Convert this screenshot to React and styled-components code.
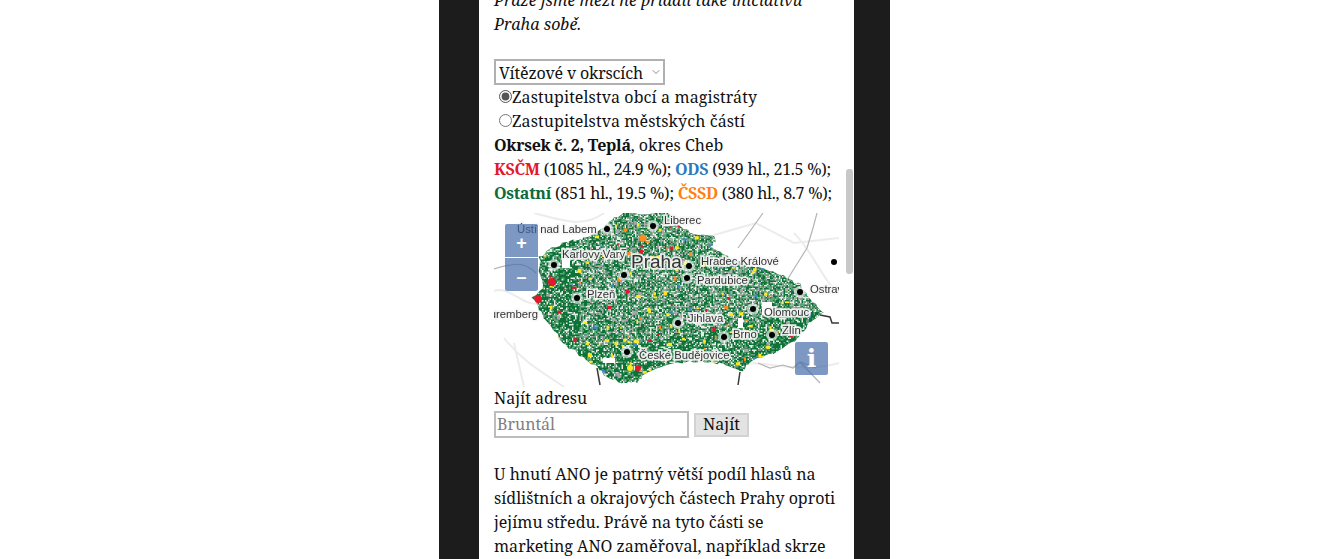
import React from "react"
import styled, { createGlobalStyle } from "styled-components"
import { ChevronDown } from "lucide-react"

const color = {
  band: "#1c1c1c",
  text: "#111",
  kscm: "#e2182d",
  ods: "#2b7bba",
  other: "#0b6b3a",
  cssd: "#ff7f0e",
  control: "rgba(63, 104, 166, 0.68)",
}

const GlobalStyle = createGlobalStyle`
  html, body {
    margin: 0;
    height: 100%;
    overflow: hidden;
    background: #fff;
  }
`

const Page = styled.div`
  display: flex;
  justify-content: center;
  height: 100vh;
  overflow: hidden;
`

const Band = styled.div`
  display: flex;
  width: 451px;
  box-sizing: border-box;
  padding: 0 36px 0 40px;
  background: ${color.band};
`

const Article = styled.main`
  position: relative;
  width: 375px;
  box-sizing: border-box;
  padding: 0 15px;
  overflow: hidden;
  background: #fff;
  color: ${color.text};
  font-family: "Noto Serif", "DejaVu Serif", serif;
  font-size: 16px;
  line-height: 24px;
`

const Paragraph = styled.p`
  margin: 0 0 23px;
`

const Lead = styled(Paragraph)`
  margin-top: -12px;
  font-style: italic;
  letter-spacing: 0.05px;
`

const SelectWrap = styled.div`
  position: relative;
  width: 171px;
  height: 26px;

  svg {
    position: absolute;
    top: 7px;
    right: 3px;
    color: #666;
    pointer-events: none;
  }
`

const Select = styled.select`
  display: block;
  width: 100%;
  height: 100%;
  box-sizing: border-box;
  padding: 0 0 4px 3px;
  border: 2px solid #b0b0b0;
  border-radius: 0;
  appearance: none;
  background: #fff;
  color: ${color.text};
  font: inherit;
  letter-spacing: -0.18px;
`

const RadioRow = styled.label`
  display: block;
  height: 24px;
  letter-spacing: 0.1px;
`

const Radio = styled.input.attrs({ type: "radio", name: "level" })`
  margin: 3px 0 0 5px;
  accent-color: #555;
`

const Line = styled.div`
  white-space: nowrap;
`

const Stats = styled(Line)`
  letter-spacing: -0.25px;
`

const Strong = styled.strong`
  letter-spacing: -0.3px;
`

const Party = styled(Strong)`
  color: ${({ $color }) => $color};
`

const MapBox = styled.div`
  position: relative;
  height: 174px;
  margin: 8px 0 -1px;
  overflow: hidden;
  background: #fff;
`

const MapSvg = styled.svg`
  display: block;
  width: 345px;
  height: 174px;
  filter: blur(0.35px);
`

const MapLabel = styled.text`
  fill: #333;
  stroke: #f6f6f6;
  stroke-width: 3.5px;
  stroke-opacity: 0.9;
  paint-order: stroke;
  font-family: "Liberation Sans", Arial, sans-serif;
  font-size: ${({ $size }) => $size || 11.3}px;
`

const ZoomControl = styled.div`
  position: absolute;
  top: 11px;
  left: 11px;
  display: flex;
  flex-direction: column;
  gap: 1px;
  width: 33px;
  overflow: hidden;
  border-radius: 2px;
`

const ControlButton = styled.button`
  display: flex;
  align-items: center;
  justify-content: center;
  width: 33px;
  height: 33px;
  padding: 4px 0 0;
  border: 0;
  background: ${color.control};
  color: #fff;
  font-family: "Liberation Sans", Arial, sans-serif;
  font-size: 18px;
  font-weight: 700;
  line-height: 1;
`

const InfoButton = styled(ControlButton)`
  position: absolute;
  right: 11px;
  bottom: 12px;
  padding: 0;
  border-radius: 2px;
  font-family: "DejaVu Serif", serif;
  font-size: 25px;
`

const SearchRow = styled.div`
  display: flex;
  align-items: center;
  gap: 5px;
  height: 27px;
  margin: 1px 0 24px;
`

const SearchInput = styled.input`
  width: 195px;
  height: 27px;
  box-sizing: border-box;
  padding: 0 1px 2px;
  border: 2px solid #bdbdbd;
  color: ${color.text};
  font: inherit;

  &::placeholder {
    color: #808080;
    opacity: 1;
  }
`

const SearchButton = styled.button`
  width: 55px;
  height: 24px;
  box-sizing: border-box;
  padding: 0 0 2px;
  border: 2px solid #d2d2d2;
  background: #e3e3e3;
  color: ${color.text};
  font: inherit;
  line-height: 18px;
`

const Scrollbar = styled.div`
  position: absolute;
  top: 169px;
  right: 1px;
  width: 7px;
  height: 105px;
  border-radius: 3px;
  background: #c8c8c8;
`

const outline = [
  [46, 45], [55, 36], [66, 32], [80, 27], [93, 25], [109, 15], [119, 5], [130, 0], [173, 0], [185, 12], [196, 20],
  [219, 24], [221, 29], [215, 34], [226, 38], [246, 50], [263, 55], [276, 58], [293, 65], [306, 72], [319, 89],
  [331, 99], [316, 108], [313, 112], [304, 125], [296, 132], [276, 142], [256, 149], [246, 159], [233, 152],
  [216, 149], [196, 149], [176, 152], [153, 159], [143, 169], [129, 170], [116, 165], [103, 155], [86, 142],
  [69, 129], [53, 109], [46, 99], [39, 85], [49, 75], [46, 59],
]

const rng = (seed) => () => {
  seed = (seed * 16807) % 2147483647
  return seed / 2147483647
}

// hrubý okraj republiky: každou hranu rozsekat a trochu rozházet
const buildBorder = () => {
  const random = rng(99)
  const points = []
  outline.forEach(([x, y], i) => {
    const [nextX, nextY] = outline[(i + 1) % outline.length]
    for (let step = 0; step < 5; step++) {
      const t = step / 5
      points.push(`${x + (nextX - x) * t + (random() - 0.5) * 3},${y + (nextY - y) * t + (random() - 0.5) * 3}`)
    }
  })
  return points.join(" ")
}

// mozaika okrsků, po barvách do jedné cesty
const buildMosaic = () => {
  const random = rng(4711)
  const cells = { "#e6ece7": "", "#a9b0ad": "", "#66a37e": "" }
  for (let y = 0; y < 174; y += 1.5) {
    for (let x = 36; x < 334; x += 1.5) {
      const edge = x < 85 || y > 132 || y + x * 0.2 > 160
      const dark = edge ? 0.6 : 0.38
      const pick = random()
      if (pick < dark) continue
      const fill = pick < dark + 0.2 ? "#66a37e" : pick < dark + 0.42 ? "#e6ece7" : "#a9b0ad"
      cells[fill] += `M${x} ${y}h1.5v1.5h-1.5z`
    }
  }
  return Object.entries(cells)
}

const buildSpots = () => {
  const random = rng(2024)
  const colors = ["#ffe81f", "#ffe81f", "#ffe81f", "#ff8a1f", "#3f86c8", "#e2182d", "#a9a3ad", "#a9a3ad"]
  const spots = []
  for (let i = 0; i < 300; i++) {
    spots.push({
      x: 45 + random() * 285,
      y: 3 + random() * 165,
      fill: colors[Math.floor(random() * colors.length)],
      w: 1.5 + random() * 3,
      h: 1.5 + random() * 2.5,
    })
  }
  return spots
}

const border = buildBorder()
const mosaic = buildMosaic()
const spots = buildSpots()

const cities = [
  ["Ústí nad Labem", 23, 20, 113, 16],
  ["Liberec", 170, 11, 159, 13],
  ["Karlovy Vary", 68, 45, 60, 52],
  ["Praha", 137, 55, 130, 62, 19],
  ["Hradec Králové", 207, 52, 195, 53],
  ["Pardubice", 203, 71, 193, 65],
  ["Plzeň", 93, 85, 83, 85],
  ["Ostrava", 316, 80, 306, 79],
  ["Olomouc", 270, 103, 259, 96],
  ["Jihlava", 194, 109, 184, 110],
  ["Zlín", 288, 121, 278, 122],
  ["Brno", 239, 125, 230, 124],
  ["České Budějovice", 145, 146, 133, 139],
]

const blobs = [
  [58, 69, 4, "#e2182d"],
  [44, 86, 4, "#e2182d"],
  [144, 155, 3, "#e2182d"],
  [149, 25, 3.5, "#ff8a1f"],
  [240, 50, 4, "#3f86c8"],
  [136, 155, 3, "#ffe81f"],
]

const holes = [
  [109, 145, 12, 5],
  [68, 45, 8, 10],
  [268, 89, 10, 13],
  [244, 105, 5, 10],
]

const CzechMap = () => (
  <MapSvg viewBox="0 0 345 174" role="img" aria-label="Mapa výsledků v okrscích">
    <defs>
      <clipPath id="cz">
        <polygon points={border} />
      </clipPath>
    </defs>
    <g fill="none" stroke="#ececec" strokeWidth="2">
      <path d="M0 78 C15 72 30 95 46 90" />
      <path d="M10 125 C30 150 50 160 70 174" />
      <path d="M40 0 C70 8 90 15 110 0" />
      <path d="M220 22 L262 10 L300 30 L345 25" />
      <path d="M300 20 C320 40 330 70 345 80" />
      <path d="M250 150 C280 150 310 160 345 150" />
      <path d="M20 130 L30 174" />
    </g>
    <g fill="none" stroke="#b4b4b4" strokeWidth="1.2">
      <path d="M244 35 L269 0" />
      <path d="M293 67 L313 35 L319 15 L323 0" />
      <path d="M264 150 L276 155 L289 152 L299 155 L306 149 L322 155" />
      <path d="M306 149 L326 170" />
      <path d="M0 56 C20 50 30 48 42 60" />
    </g>
    <g fill="none" stroke="#3a3a3a" strokeWidth="1.5">
      <path d="M326 102 L336 104 L338 110 L345 110" />
      <path d="M246 159 L244 172" />
      <path d="M103 155 L106 172" />
      <path d="M0 98 L8 102" strokeWidth="1" stroke="#888" />
    </g>
    <polygon points={border} fill="#0d7236" />
    <g clipPath="url(#cz)">
      {mosaic.map(([fill, d]) => (
        <path key={fill} d={d} fill={fill} />
      ))}
      {spots.map((spot, i) => (
        <rect key={i} x={spot.x} y={spot.y} width={spot.w} height={spot.h} fill={spot.fill} />
      ))}
      {blobs.map(([x, y, r, fill], i) => (
        <circle key={i} cx={x} cy={y} r={r} fill={fill} />
      ))}
    </g>
    {holes.map(([x, y, w, h], i) => (
      <rect key={i} x={x} y={y} width={w} height={h} fill="#fff" />
    ))}
    <MapLabel x="44" y="105" textAnchor="end">
      Nuremberg
    </MapLabel>
    {cities.map(([name, x, y, dotX, dotY, size]) => (
      <g key={name}>
        <circle cx={dotX} cy={dotY} r="6" fill="#fff" fillOpacity="0.6" />
        <circle cx={dotX} cy={dotY} r="3" fill="#000" />
        <MapLabel x={x} y={y} $size={size}>
          {name}
        </MapLabel>
      </g>
    ))}
    <circle cx="340" cy="49" r="3" fill="#000" />
  </MapSvg>
)

const App = () => (
  <Page>
    <GlobalStyle />
    <Band>
      <Article>
        <Lead>Praze jsme mezi ně přidali také iniciativu Praha sobě.</Lead>
        <SelectWrap>
          <Select defaultValue="winners">
            <option value="winners">Vítězové v okrscích</option>
          </Select>
          <ChevronDown size={12} strokeWidth={1.5} />
        </SelectWrap>
        <RadioRow>
          <Radio defaultChecked />
          Zastupitelstva obcí a magistráty
        </RadioRow>
        <RadioRow>
          <Radio />
          Zastupitelstva městských částí
        </RadioRow>
        <Line>
          <Strong>Okrsek č. 2, Teplá</Strong>, okres Cheb
        </Line>
        <Stats>
          <Party $color={color.kscm}>KSČM</Party> (1085 hl., 24.9 %); <Party $color={color.ods}>ODS</Party> (939 hl., 21.5 %);
        </Stats>
        <Stats>
          <Party $color={color.other}>Ostatní</Party> (851 hl., 19.5 %); <Party $color={color.cssd}>ČSSD</Party> (380 hl., 8.7 %);
        </Stats>
        <MapBox>
          <CzechMap />
          <ZoomControl>
            <ControlButton>+</ControlButton>
            <ControlButton>–</ControlButton>
          </ZoomControl>
          <InfoButton>i</InfoButton>
        </MapBox>
        <Line>Najít adresu</Line>
        <SearchRow>
          <SearchInput placeholder="Bruntál" />
          <SearchButton>Najít</SearchButton>
        </SearchRow>
        <Paragraph>
          U hnutí ANO je patrný větší podíl hlasů na sídlištních a okrajových částech Prahy oproti jejímu středu. Právě na
          tyto části se marketing ANO zaměřoval, například skrze
        </Paragraph>
        <Scrollbar />
      </Article>
    </Band>
  </Page>
)

export default App
